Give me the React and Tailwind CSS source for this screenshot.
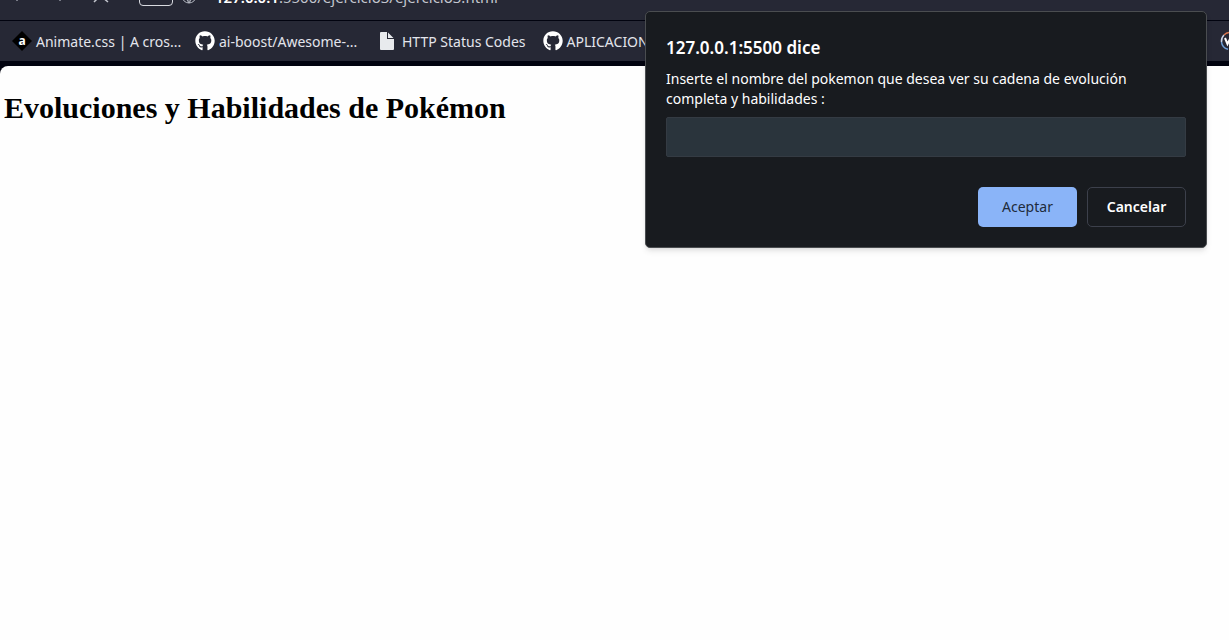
import { FaGithub } from "react-icons/fa";

function DiamondIcon() {
  return (
    <svg className="size-5 shrink-0" viewBox="0 0 20 20" aria-hidden="true">
      <path d="M10 0 20 10 10 20 0 10Z" fill="#000" />
      <text x="10" y="14" textAnchor="middle" fontSize="12" fontWeight="700" fontFamily="Open Sans, sans-serif" fill="#fff">a</text>
    </svg>
  );
}

function FileIcon() {
  return (
    <svg className="size-5 shrink-0" viewBox="0 0 20 20" aria-hidden="true">
      <path d="M3 1H9V8H16V18Q16 19 15 19H3Q2 19 2 18V2Q2 1 3 1ZM10 1.500 15.500 7H10Z" fill="#e8eaed" />
    </svg>
  );
}

function RingIcon() {
  return (
    <svg className="size-5 shrink-0" viewBox="0 0 20 20" fill="none" aria-hidden="true">
      <path d="M1.500 11A8.500 8.500 0 0 1 4 4" stroke="#c9d4e8" strokeWidth="1.500" />
      <path d="M4 4A8.500 8.500 0 0 1 16 4" stroke="#d9764f" strokeWidth="1.500" />
      <path d="M1.500 11A8.500 8.500 0 0 0 8 18.300" stroke="#6f9fd8" strokeWidth="1.500" />
      <path d="M5 7 7.500 13 10 8 12.500 13 15 7" stroke="#fff" strokeWidth="2" />
    </svg>
  );
}

function Bookmark({ icon, label, wide }) {
  return (
    <a href="#" className="flex shrink-0 items-center gap-1 whitespace-nowrap">
      {icon}
      <span className={wide ? "w-[142px]" : ""}>{label}</span>
    </a>
  );
}

function Toolbar() {
  return (
    <div className="flex h-5 items-end overflow-hidden bg-[#262835] text-[#c3c6ce]">
      <svg className="mb-3 h-2 w-32 shrink-0" viewBox="0 0 128 8" fill="none" aria-hidden="true">
        <path d="M94 2 99-3M102-3 108 2" stroke="#c3c6ce" strokeWidth="1.500" />
        <path d="M16 .500h2M59 .500h2" stroke="#777a86" />
      </svg>
      <div className="mb-[14px] ml-[11px] h-6 w-[34px] shrink-0 rounded border border-[#d8dae0]" />
      <svg className="mb-4 ml-2 size-4 shrink-0" viewBox="0 0 16 16" fill="none" stroke="#b4b8c2" aria-hidden="true">
        <circle cx="8" cy="8" r="7" />
        <path d="M1 8H15M8 1V15M8 1Q2 8 8 15M8 1Q14 8 8 15" />
      </svg>
      <span className="mb-[13px] ml-[18px] whitespace-nowrap text-[15px] leading-5">
        <b className="font-semibold text-white">127.0.0.1</b>:5500/ejercicio3/ejercicio3.html
      </span>
    </div>
  );
}

function PromptDialog() {
  return (
    <form
      role="dialog"
      aria-labelledby="prompt-title"
      className="absolute right-[22px] top-[11px] w-[562px] rounded-[5px] border border-[#4a4d50] bg-[#181b1f] px-5 pb-5 pt-6 text-white shadow-md"
    >
      <h2 id="prompt-title" className="text-[17px] font-semibold leading-6">127.0.0.1:5500 dice</h2>
      <label htmlFor="pokemon" className="mt-[9px] block leading-5">
        Inserte el nombre del pokemon que desea ver su cadena de evolución completa y habilidades :
      </label>
      <input id="pokemon" type="text" className="mt-2 block h-10 w-full rounded-xs border border-[#343b43] bg-[#2a343c] px-3 outline-none" />
      <div className="mt-[30px] flex justify-end gap-[10px]">
        <button type="button" className="h-10 w-[99px] rounded-[5px] bg-[#8ab4f8] pb-[2px] text-[#202b3b]">Aceptar</button>
        <button type="button" className="h-10 w-[99px] rounded-[5px] border border-[#3c404b] pb-[2px] font-semibold">Cancelar</button>
      </div>
    </form>
  );
}

export default function App() {
  return (
    <div className="relative flex min-h-screen flex-col bg-[#01030f] font-['Noto_Sans',sans-serif] text-[14px]">
      <Toolbar />
      <nav aria-label="Marcadores" className="mt-px flex h-10 items-center overflow-hidden bg-[#262835] pl-3 text-[#e3e5ec]">
        <div className="flex min-w-0 flex-1 items-center gap-[17px] overflow-hidden">
          <Bookmark icon={<DiamondIcon />} label="Animate.css | A cros..." wide />
          <Bookmark icon={<FaGithub className="size-5 text-white" />} label="ai-boost/Awesome-..." wide />
          <Bookmark icon={<FileIcon />} label="HTTP Status Codes" />
          <Bookmark icon={<FaGithub className="size-5 text-white" />} label="APLICACIONES" />
        </div>
        <a href="#" aria-label="Marcador" className="-mr-[11px] shrink-0"><RingIcon /></a>
      </nav>
      <main className="mt-[5px] grow rounded-tl-lg bg-[#fefefe] px-1 pt-6">
        <h1 className="font-['Liberation_Serif',serif] text-[30px] font-bold leading-9 text-black">Evoluciones y Habilidades de Pokémon</h1>
      </main>
      <PromptDialog />
    </div>
  );
}
